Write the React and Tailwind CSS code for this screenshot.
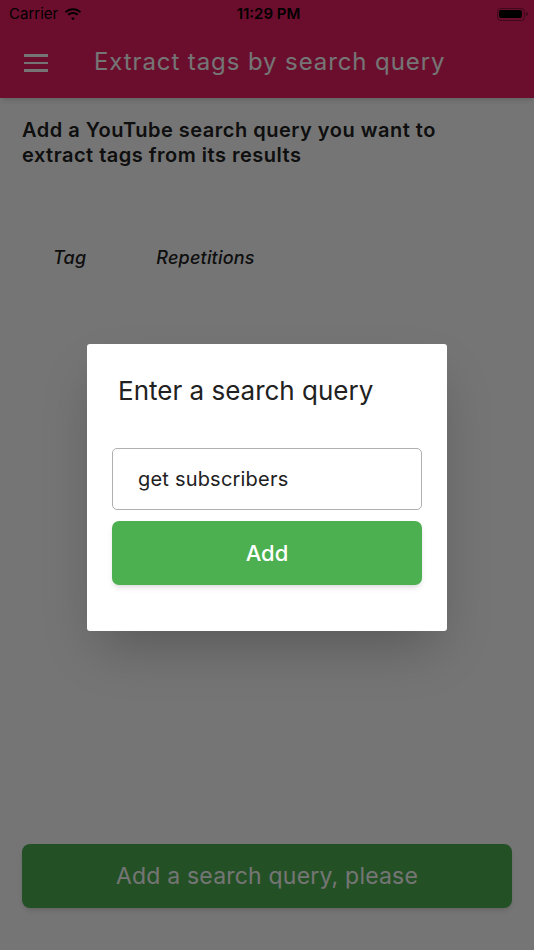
import React, { useState } from "react";

const font = { fontFamily: "Inter, 'Noto Sans', sans-serif" };

const Wifi = () => (
  <svg width="18" height="13" viewBox="0 0 18 13" fill="#000">
    <path d="M9 2.2c2.6 0 5 1 6.8 2.7l1.3-1.4C14.9 1.4 12.1.2 9 .2S3.1 1.4.9 3.5l1.3 1.4C4 3.2 6.4 2.2 9 2.2z" />
    <path d="M9 5.9c1.6 0 3 .6 4.2 1.6l1.3-1.4C13 4.7 11.1 3.9 9 3.9s-4 .8-5.5 2.2l1.3 1.4C6 6.5 7.4 5.9 9 5.9z" />
    <path d="M9 9.4c.7 0 1.4.3 1.9.7L9 12.2 7.1 10.1c.5-.4 1.2-.7 1.9-.7z" />
  </svg>
);

const Battery = () => (
  <div className="flex items-center">
    <div className="w-[28px] h-[13px] rounded-[4px] border border-black/40 p-[1.5px]">
      <div className="w-full h-full rounded-[2px] bg-black" />
    </div>
    <div className="w-[2px] h-[4px] bg-black/40 rounded-r-sm ml-[1px]" />
  </div>
);

export default function App() {
  const [query, setQuery] = useState("get subscribers");

  return (
    <div className="relative w-[534px] h-[950px] overflow-hidden bg-white" style={font}>
      {/* page under the dialog */}
      <div className="flex flex-col h-full">
        <div className="bg-[#e91e63]">
          <div className="h-[28px] flex items-center justify-between pl-[9px] pr-[6px] text-[15px] text-black">
            <div className="flex items-center gap-[6px] w-[120px]">
              <span>Carrier</span>
              <Wifi />
            </div>
            <span className="font-semibold">11:29 PM</span>
            <div className="w-[120px] flex justify-end">
              <Battery />
            </div>
          </div>
          <div className="h-[70px] flex items-center shadow-md">
            <div className="w-[24px] ml-[24px] flex flex-col gap-[5px]">
              <div className="h-[2.5px] bg-white" />
              <div className="h-[2.5px] bg-white" />
              <div className="h-[2.5px] bg-white" />
            </div>
            <span className="ml-[46px] text-white text-[24px] tracking-[0.9px] -mt-[2px]">
              Extract tags by search query
            </span>
          </div>
        </div>

        <div className="flex-1 flex flex-col px-[22px]">
          <p className="mt-[20px] text-[20px] leading-[25px] tracking-[0.5px] font-semibold text-[#212121]">
            Add a YouTube search query you want to
            <br />
            extract tags from its results
          </p>
          <div className="flex mt-[76px] text-[18px] italic font-medium tracking-[0.2px] text-[#212121]">
            <span className="ml-[31px]">Tag</span>
            <span className="ml-[70px]">Repetitions</span>
          </div>

          <button className="mt-auto mb-[42px] h-[64px] w-full rounded-[8px] bg-[#4caf50] text-white text-[23px] tracking-[0.2px] shadow-md">
            Add a search query, please
          </button>
        </div>
      </div>

      {/* modal barrier */}
      <div className="absolute inset-0 bg-black/54 flex justify-center items-start pt-[344px]">
        <div className="w-[360px] h-[287px] bg-white rounded-[3px] shadow-2xl px-[25px] pt-[27px]">
          <h2 className="ml-[6px] text-[26px] text-[#212121]">Enter a search query</h2>
          <input
            value={query}
            onChange={(e) => setQuery(e.target.value)}
            className="mt-[38px] w-full h-[62px] border border-[#b0b0b0] rounded-[5px] px-[25px] text-[20px] tracking-[0.2px] text-[#212121] outline-none"
          />
          <button className="mt-[11px] w-full h-[64px] rounded-[7px] bg-[#4caf50] text-white text-[22px] font-medium shadow-md">
            Add
          </button>
        </div>
      </div>
    </div>
  );
}
